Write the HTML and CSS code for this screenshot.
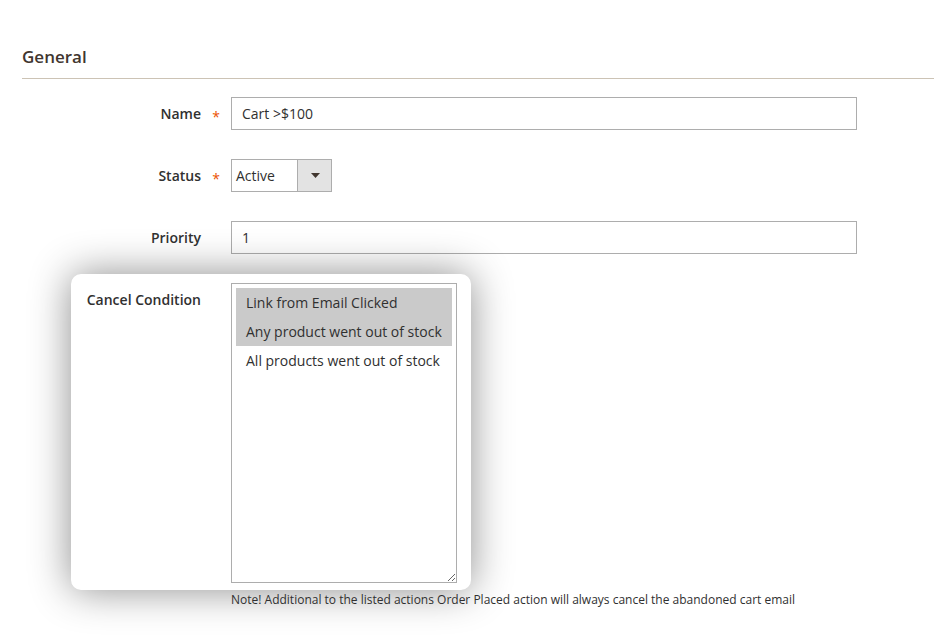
FILE: index.html
```html
<!DOCTYPE html>
<html>
<head>
<meta charset="utf-8">
<link rel="stylesheet" href="styles.css">
</head>
<body>
<div class="page">
  <div class="legend">General</div>
  <div class="rows">
    <div class="row">
      <div class="label required">Name</div>
      <div class="control"><div class="input wide">Cart &gt;$100</div></div>
    </div>
    <div class="row">
      <div class="label required">Status</div>
      <div class="control">
        <div class="select">
          <span class="select-value">Active</span>
          <span class="select-arrow"><svg width="9" height="5" viewBox="0 0 9 5"><path d="M0 0h9L4.5 5z" fill="#41362f"/></svg></span>
        </div>
      </div>
    </div>
    <div class="row">
      <div class="label">Priority</div>
      <div class="control"><div class="input wide">1</div></div>
    </div>
    <div class="row card-row">
      <div class="card">
        <div class="label card-label">Cancel Condition</div>
        <div class="multiselect">
          <div class="opt sel">Link from Email Clicked</div>
          <div class="opt sel">Any product went out of stock</div>
          <div class="opt">All products went out of stock</div>
        </div>
      </div>
    </div>
    <div class="note">Note! Additional to the listed actions Order Placed action will always cancel the abandoned cart email</div>
  </div>
</div>
</body>
</html>
```
FILE: styles.css
```css
* { box-sizing: border-box; }
html, body { margin: 0; padding: 0; background: #fff; }
body {
  font-family: "Open Sans", "Liberation Sans", sans-serif;
  font-size: 14px;
  color: #303030;
  min-height: 100vh;
}
.page { padding: 45px 12px 0 22px; }
.legend {
  font-size: 17px;
  font-weight: 600;
  color: #41362f;
  line-height: 24px;
  padding-bottom: 9px;
  border-bottom: 1px solid #ccc3b5;
}
.rows { padding-top: 18px; display: flex; flex-direction: column; }
.row { display: flex; align-items: center; margin-bottom: 29px; }
.label {
  width: 209px;
  flex: none;
  text-align: right;
  padding-right: 30px;
  font-weight: 600;
  color: #303030;
  position: relative;
  line-height: 19px;
}
.label.required::after {
  content: "*";
  color: #eb5202;
  position: absolute;
  right: 11px;
  top: 3px;
  font-size: 14px;
  font-weight: 400;
}
.input {
  height: 33px;
  border: 1px solid #adadad;
  padding: 0 10px;
  line-height: 31px;
  color: #303030;
}
.wide { width: 626px; }
.select {
  display: flex;
  width: 101px;
  height: 33px;
  border: 1px solid #adadad;
}
.select-value { flex: 1; padding-left: 4px; line-height: 31px; }
.select-arrow {
  width: 34px;
  background: #e3e3e3;
  border-left: 1px solid #adadad;
  display: flex;
  align-items: center;
  justify-content: center;
}
.select-arrow svg { margin-left: 1px; }
.card-row { margin-top: -9px; margin-bottom: 0; align-items: flex-start; }
.card {
  margin-left: 49px;
  width: 400px;
  height: 316px;
  background: #fff;
  border-radius: 10px;
  box-shadow: 0 0 40px rgba(0, 0, 0, 0.45);
  display: flex;
  align-items: flex-start;
  padding-top: 9px;
}
.card-label { width: 160px; padding-top: 7px; }
.multiselect {
  width: 226px;
  height: 300px;
  border: 1px solid #adadad;
  padding: 4px;
  overflow: auto;
  resize: both;
}
.opt {
  height: 29px;
  line-height: 29px;
  padding-left: 10px;
  white-space: nowrap;
  color: #303030;
}
.opt.sel { background: #cacaca; }
.note {
  margin-left: 209px;
  margin-top: 0;
  font-size: 12px;
  line-height: 20px;
  color: #303030;
}
```
